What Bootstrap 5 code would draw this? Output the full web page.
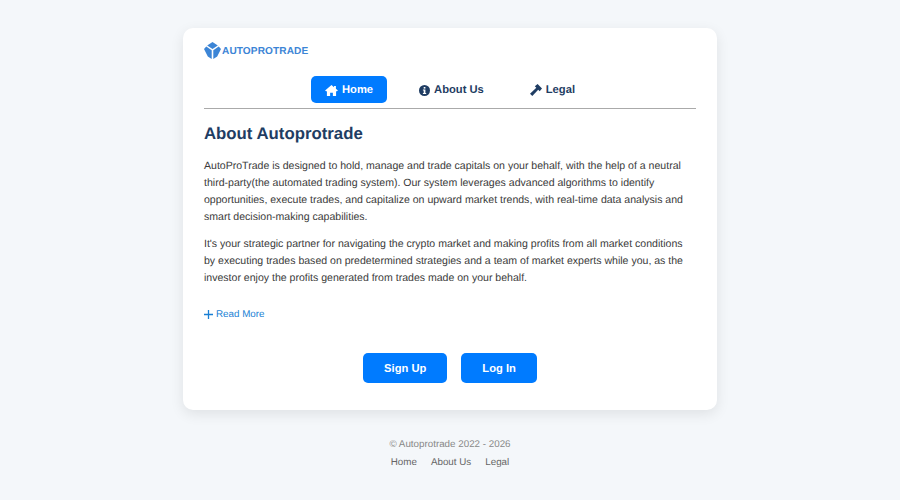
<!DOCTYPE html>
<html lang="en"><head><meta charset="utf-8"><title>About Autoprotrade</title>
<link href="https://cdn.jsdelivr.net/npm/bootstrap@5.3.0/dist/css/bootstrap.min.css" rel="stylesheet">
<style>
html,body{height:100%}
body{background:#f4f7fa;font-family:"Liberation Sans",Arial,sans-serif;color:#333;overflow:hidden;text-rendering:geometricPrecision}
.apt-card{width:534px;height:382px;margin-top:28px;padding:12px 21px 0;background:#fff;border-radius:10px;box-shadow:0 4px 14px rgba(0,0,0,.09)}
.apt-logo{height:21px;gap:1px;color:#3c85d6;font-size:10.1px;font-weight:700;letter-spacing:.1px}
.apt-logo span{padding-top:2px}
.apt-nav{padding:15px 0 5px;gap:18px;border-bottom:1px solid #aaa}
.apt-link{height:27px;padding:1px 14px 0;border-radius:5px;color:#1f3d63;font-size:11.2px;font-weight:700;text-decoration:none;gap:4px;display:flex;align-items:center}
.apt-link.on{background:#007bff;color:#fff}
.apt-title{font-size:16.8px;font-weight:700;color:#1f3d63;margin:14px 0 13px;line-height:22px}
.apt-text{font-size:10.55px;line-height:17px;margin:0 0 10px;color:#3a3a3a}
.apt-more{font-size:9.8px;color:#1a7fd4;text-decoration:none;margin-top:21px;gap:3px}
.apt-more svg{margin-top:-2px}
.apt-acts{gap:14px;margin-top:30px}
.apt-btn{height:30px;background:#007bff;color:#fff;font-size:11.2px;font-weight:700;border:0;border-radius:5px;padding:1px 21px 0;display:flex;align-items:center;justify-content:center}
.apt-foot{color:#888;font-size:9.8px;margin-top:28px}
.apt-foot a{color:#666;text-decoration:none}
.apt-gap{gap:14px}
.apt-copy{margin-bottom:3px}
</style></head>
<body>
<div class="d-flex flex-column align-items-center">
<main class="apt-card">
 <div class="apt-logo d-flex align-items-center">
  <svg width="17" height="17" viewBox="0 0 17 17"><path fill="#3c85d6" d="M8.500 0 13.800 3.500 8.500 7 3.200 3.500zM2.300 4.600 7.700 8.200V17L3.800 14.500 0 7zM14.700 4.600 17 7 13.200 14.500 9.300 17V8.200z"/></svg>
  <span>AUTOPROTRADE</span>
 </div>
 <nav class="apt-nav d-flex justify-content-center">
  <a class="apt-link on" href="#"><svg width="13" height="11" viewBox="0 0 14 12"><path fill="currentColor" d="M7 0 9.800 2.400V1H11.800V4.100L14 6 13 6.800H12V12H8.500V8.500H5.500V12H2V6.800H1L0 6z"/></svg>Home</a>
  <a class="apt-link" href="#"><svg width="11" height="11" viewBox="0 0 11 11"><circle cx="5.500" cy="5.500" r="5.500" fill="currentColor"/><rect x="4.700" y="2" width="1.700" height="1.600" fill="#fff"/><path fill="#fff" d="M3.900 4.500H6.400V8H7.200V9H3.900V8H4.700V5.500H3.900z"/></svg>About Us</a>
  <a class="apt-link" href="#"><svg width="12" height="12" viewBox="0 0 12 12"><path fill="currentColor" d="M4.800 2.300 7.600 0 12 4.400 9.700 7.200 8.200 5.700 2.300 12 0 9.800 6.300 3.800z"/></svg>Legal</a>
 </nav>
 <h1 class="apt-title">About Autoprotrade</h1>
 <p class="apt-text">AutoProTrade is designed to hold, manage and trade capitals on your behalf, with the help of a neutral third-party(the automated trading system). Our system leverages advanced algorithms to identify opportunities, execute trades, and capitalize on upward market trends, with real-time data analysis and smart decision-making capabilities.</p>
 <p class="apt-text">It's your strategic partner for navigating the crypto market and making profits from all market conditions by executing trades based on predetermined strategies and a team of market experts while you, as the investor enjoy the profits generated from trades made on your behalf.</p>
 <a class="apt-more d-flex align-items-center" href="#"><svg width="9" height="9" viewBox="0 0 9 9"><path stroke="currentColor" stroke-width="1.300" d="M4.500 0V9M0 4.500H9"/></svg>Read More</a>
 <div class="d-flex justify-content-center apt-acts">
  <button class="apt-btn">Sign Up</button>
  <button class="apt-btn">Log In</button>
 </div>
</main>
<footer class="apt-foot text-center">
 <div class="apt-copy">© Autoprotrade 2022 - 2026</div>
 <div class="d-flex justify-content-center apt-gap"><a href="#">Home</a><a href="#">About Us</a><a href="#">Legal</a></div>
</footer>
</div>
</body></html>
